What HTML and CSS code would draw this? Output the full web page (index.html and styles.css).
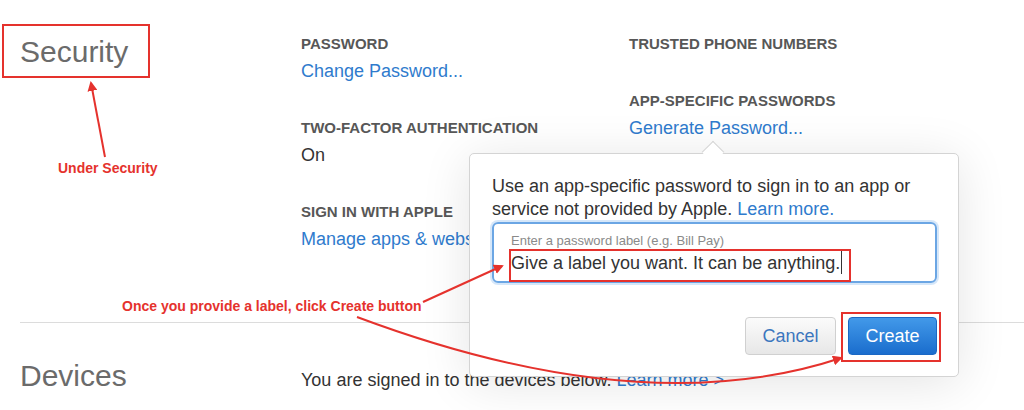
FILE: index.html
```html
<!DOCTYPE html>
<html lang="en">
<head>
<meta charset="utf-8">
<title>Security</title>
<link rel="stylesheet" href="styles.css">
</head>
<body>
<main class="page">
  <section class="section security">
    <h2 class="sec-title">Security</h2>
    <div class="col">
      <div class="item">
        <div class="label">PASSWORD</div>
        <a class="value link">Change Password...</a>
      </div>
      <div class="item">
        <div class="label">TWO-FACTOR AUTHENTICATION</div>
        <div class="value">On</div>
      </div>
      <div class="item">
        <div class="label">SIGN IN WITH APPLE</div>
        <a class="value link">Manage apps &amp; websites...</a>
      </div>
    </div>
    <div class="col col-2">
      <div class="item">
        <div class="label">TRUSTED PHONE NUMBERS</div>
      </div>
      <div class="item">
        <div class="label">APP-SPECIFIC PASSWORDS</div>
        <a class="value link">Generate Password...</a>
      </div>
    </div>
  </section>
  <section class="section devices">
    <h2 class="sec-title">Devices</h2>
    <p class="devices-text">You are signed in to the devices below. <a class="link">Learn more &gt;</a></p>
  </section>
</main>

<div class="popover">
  <p class="pop-text">Use an app-specific password to sign in to an app or service not provided by Apple. <a class="link">Learn more.</a></p>
  <div class="field">
    <div class="ph">Enter a password label (e.g. Bill Pay)</div>
    <div class="entry">Give a label you want. It can be anything.<span class="caret"></span></div>
  </div>
  <div class="actions">
    <button class="btn btn-cancel">Cancel</button>
    <button class="btn btn-create">Create</button>
  </div>
</div>

<div class="anno-box box-security"></div>
<div class="anno-box box-entry"></div>
<div class="anno-box box-create"></div>
<div class="anno-text text-under">Under Security</div>
<div class="anno-text text-once">Once you provide a label, click Create button</div>

<svg class="anno-svg" width="1024" height="410" viewBox="0 0 1024 410">
  <defs>
    <marker id="ah" viewBox="0 0 10 10" refX="8" refY="5" markerWidth="5" markerHeight="5" orient="auto">
      <path d="M0,0 L10,5 L0,10 z" fill="#e5322d"/>
    </marker>
  </defs>
  <path d="M105,157 L91,83" stroke="#e5322d" stroke-width="2" fill="none" marker-end="url(#ah)"/>
  <path d="M423,302 L502,266" stroke="#e5322d" stroke-width="2" fill="none" marker-end="url(#ah)"/>
  <path d="M357,317 C520,378 690,408 841,358" stroke="#e5322d" stroke-width="2" fill="none" marker-end="url(#ah)"/>
</svg>
</body>
</html>
```

FILE: styles.css
```css
html, body {
  margin: 0;
  padding: 0;
}
body {
  width: 1024px;
  height: 410px;
  overflow: hidden;
  position: relative;
  background: #fff;
  color: #333;
  font-family: "Liberation Sans", Arial, Helvetica, sans-serif;
}
.link {
  color: #2f7bcd;
  text-decoration: none;
}
.section {
  display: flex;
  margin-left: 20px;
}
.sec-title {
  flex: none;
  width: 281px;
  margin: 0;
  font-size: 30px;
  line-height: 36px;
  font-weight: 400;
  color: #6b6b6b;
}
.security {
  box-sizing: border-box;
  height: 323px;
  padding-top: 34px;
  border-bottom: 1px solid #dcdcdc;
}
.col {
  width: 328px;
  display: flex;
  flex-direction: column;
  gap: 35px;
}
.col-2 {
  gap: 37px;
}
.label {
  font-size: 15px;
  line-height: 20px;
  font-weight: 700;
  color: #575757;
}
.value {
  display: block;
  margin-top: 5px;
  font-size: 18px;
  line-height: 24px;
  white-space: nowrap;
}
.devices {
  padding-top: 35px;
  align-items: baseline;
}
.devices-text {
  margin: 0;
  font-size: 18px;
  line-height: 24px;
  color: #333;
}

/* popover */
.popover {
  position: absolute;
  left: 469px;
  top: 153px;
  width: 490px;
  height: 224px;
  box-sizing: border-box;
  padding: 21px 21px 0 22px;
  background: #fff;
  border: 1px solid #d4d4d4;
  border-radius: 5px;
  box-shadow: 0 6px 50px rgba(0, 0, 0, 0.11);
}
.popover::before {
  content: "";
  position: absolute;
  left: 235px;
  top: -10px;
  width: 16px;
  height: 16px;
  box-sizing: border-box;
  background: #fff;
  border-top: 1px solid #d4d4d4;
  border-left: 1px solid #d4d4d4;
  transform: rotate(45deg);
}
.pop-text {
  margin: 0;
  font-size: 18px;
  line-height: 23px;
  color: #333;
}
.field {
  position: relative;
  margin-top: 1px;
  height: 61px;
  box-sizing: border-box;
  padding: 9px 17px 0;
  border: 2px solid #6ba6e4;
  border-radius: 6px;
  box-shadow: 0 0 0 2px rgba(120, 175, 235, 0.3);
}
.ph {
  font-size: 13px;
  line-height: 16px;
  color: #8a8a8a;
}
.entry {
  margin-top: 1px;
  font-size: 18px;
  line-height: 24px;
  color: #333;
  white-space: nowrap;
}
.caret {
  display: inline-block;
  width: 0;
  height: 24px;
  margin-left: 1px;
  border-left: 1px solid #333;
  vertical-align: -5px;
}
.actions {
  display: flex;
  justify-content: flex-end;
  gap: 12px;
  margin-top: 34px;
}
.btn {
  height: 38px;
  box-sizing: border-box;
  border-radius: 4px;
  font-family: inherit;
  font-size: 18px;
  padding: 0;
}
.btn-cancel {
  width: 91px;
  color: #3b76be;
  background: linear-gradient(#fbfbfb, #e7e7e7);
  border: 1px solid #d0d0d0;
}
.btn-create {
  width: 89px;
  color: #fff;
  background: linear-gradient(#4299e9, #1a6dcd);
  border: 1px solid #1b68c4;
}

/* annotations */
.anno-box {
  position: absolute;
  box-sizing: border-box;
  border: 2px solid #e5322d;
}
.box-security {
  left: 2px;
  top: 24px;
  width: 148px;
  height: 54px;
}
.box-entry {
  left: 509px;
  top: 249px;
  width: 342px;
  height: 33px;
}
.box-create {
  left: 841px;
  top: 312px;
  width: 100px;
  height: 50px;
}
.anno-text {
  position: absolute;
  color: #e5322d;
  font-weight: 700;
  font-size: 14px;
  line-height: 16px;
  white-space: nowrap;
}
.text-under {
  left: 58px;
  top: 160px;
}
.text-once {
  left: 122px;
  top: 298px;
}
.anno-svg {
  position: absolute;
  left: 0;
  top: 0;
  pointer-events: none;
}
```
